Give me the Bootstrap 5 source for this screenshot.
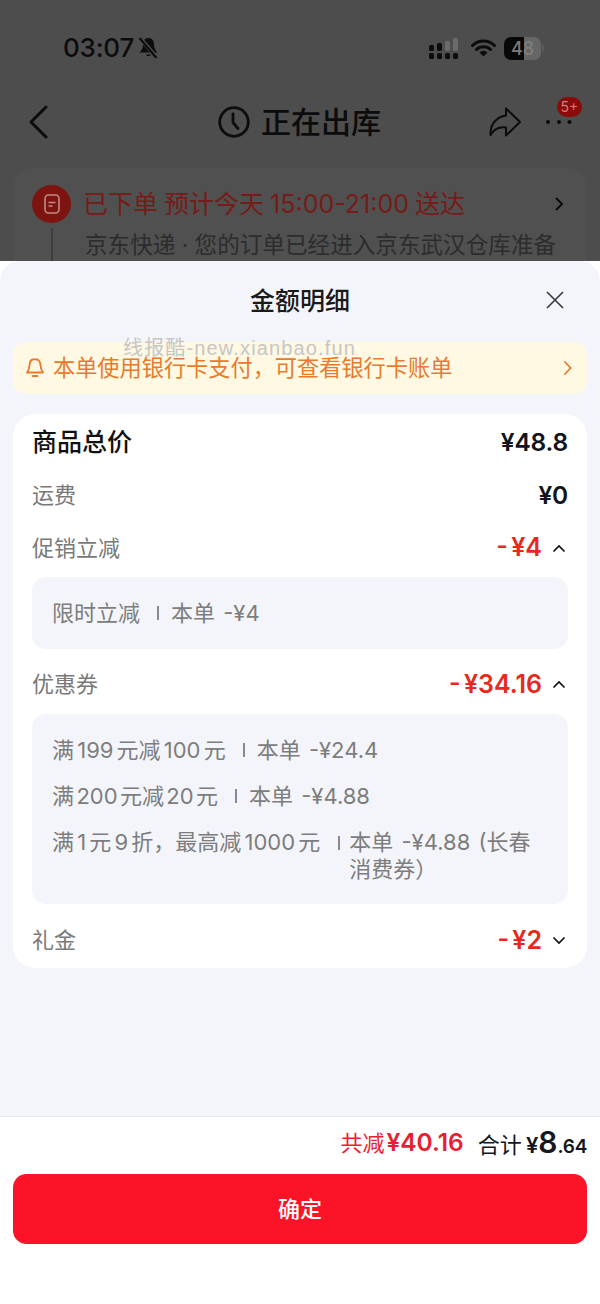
<!DOCTYPE html>
<html lang="zh-CN">
<head>
<meta charset="utf-8">
<title>金额明细</title>
<link rel="stylesheet" href="https://cdn.jsdelivr.net/npm/bootstrap@5.3.0/dist/css/bootstrap.min.css">
<style>
html,body{margin:0;height:1304px;overflow:hidden;background:#fff}
body{font-family:"Inter","Noto Sans CJK SC",sans-serif;color:#1a1a1a}
.screen{width:600px;height:1304px}
.backdrop{height:261px;flex:none;background:#4d4d4d;overflow:hidden;color:#0c0c0c}
.statusrow{height:98px;padding:0 56px 2px 63px}
.clock{font-size:26px;font-weight:500;letter-spacing:-.2px;line-height:1}
.battery{width:37px;height:23px;border-radius:7px;background:linear-gradient(90deg,#080808 54%,#666 54%);font-size:18px;font-weight:500;line-height:23px;text-align:center}
.batfour{color:#7b7b7b}
.bateight{color:#7f7f7f}
.batcap{width:2px;height:8px;background:#5c5c5c;border-radius:0 2px 2px 0;margin-left:1px}
.navrow{height:48px;padding:0 28px 0 28px;position:relative}
.navtitle{font-size:30px;font-weight:500;line-height:48px;gap:11px;left:218px;top:0}
.redbadge{top:-10px;right:-10px;width:25px;height:20px;border-radius:10px;background:#8b0b0b;color:#cf8078;font-size:14px;line-height:20px;text-align:center}
.ordercard{margin:22px 13px 0;height:120px;background:#505050;border-radius:20px;padding:15px 19px}
.ordericon{width:39px;height:38px;border-radius:50%;background:#7d1410;flex:none}
.orderhead{font-size:25px;line-height:42px;color:#761b17;font-weight:400;white-space:nowrap;word-spacing:-1px}
.ordertail{margin:3px 0 0 19px;padding-left:32px;border-left:2px solid #3d3d3d}
.ordersub{font-size:22.6px;line-height:34px;color:#2c2c2c;white-space:nowrap}
.sheet{background:#f4f5fa;border-radius:20px 20px 0 0;margin-top:0;min-height:0;position:relative;flex:1 1 auto}
.sheethead{height:81px;position:relative}
.sheettitle{font-size:25px;font-weight:500;line-height:81px}
.closer{position:absolute;right:35px;top:29px}
.notice{margin:0 13px;height:52px;background:#fff8e3;border-radius:13px;color:#e77b2b;font-size:22.2px;padding:0 14px 0 12px}
.wmark{position:absolute;left:123px;top:72px;font-size:20px;line-height:30px;color:#c6c6c6;letter-spacing:1.15px;white-space:nowrap;font-family:"Liberation Sans","Noto Sans CJK SC",sans-serif}
.pricebox{margin:20px 13px 0;height:554px;background:#fff;border-radius:22px;padding:0 19px}
.prow{display:flex;justify-content:space-between;align-items:center}
.prow-total{height:57px}
.prow-ship{height:48px}
.prow-promo{height:58px}
.prow-coupon{height:65px;padding-top:6px}
.prow-gift{height:64px;padding-top:9px}
.plabel{font-size:22px;color:#797979}
.ptotal{font-size:25px;font-weight:500;color:#111}
.pamount{font-size:24.500px;font-weight:600;color:#12131c;font-family:"Inter",sans-serif;letter-spacing:-.2px}
.pcut{font-size:25px;font-weight:600;color:#e8281c;font-family:"Inter",sans-serif;word-spacing:-3px}
.chev{width:14px;margin-left:10px;margin-right:2px;flex:none}
.detail{background:#f4f5fa;border-radius:14px;padding:0 20px;font-size:22px;color:#7d7d7d}
.detail-one{height:72px}
.detail-many{height:190px;padding-top:13px}
.dline{display:flex;align-items:center;white-space:nowrap}
.dline-single{height:46px}
.dline-wrap{margin-top:10px;line-height:27px;align-items:flex-start}
.dcond{word-spacing:-3px}
.dcond-tight{word-spacing:-3.800px}
.dval{word-spacing:2px}
.dsep{flex:none;width:2px;height:14px;background:#8a8a8a;margin:0 12px 0 17px}
.dsep-wrap{margin:7px 9px 0 18px}
.dval-wrap{white-space:normal;width:182px}
.sumbar{height:188px;flex:none;background:#fff;border-top:1px solid #e8e9ec;padding:0 13px}
.sumrow{height:57px;font-size:22px;padding-bottom:6px}
.cutsum{color:#e81f33}
.cutsum b,.paysum b{font-weight:600;font-family:"Inter",sans-serif}
.cutsum b{font-size:24.500px;margin-left:2px}
.paysum{margin-left:14px;color:#15161e;word-spacing:-2px}
.paybig{font-size:30px}
.paysmall{font-size:19px;letter-spacing:-.3px}
.okbtn{height:70px;width:100%;background:#fb1427;border-color:#fb1427;border-radius:13px;color:#fff;font-size:22px;font-weight:500}
.okbtn:hover{background:#fb1427;border-color:#fb1427;color:#fff}
</style>
</head>
<body>
<div class="screen d-flex flex-column">
  <div class="backdrop">
    <div class="statusrow d-flex align-items-center justify-content-between">
      <div class="d-flex align-items-center gap-1">
        <span class="clock">03:07</span>
        <svg width="21" height="24" viewBox="0 0 21 24"><path d="M10.500 2C6.500 2 5 5 5 8.500c0 4-1.500 6-3.500 8h18c-2-2-3.500-4-3.500-8C16 5 14.500 2 10.500 2z" fill="#0c0c0c"/><path d="M8 18.500a2.700 2.700 0 0 0 5 0z" fill="#0c0c0c"/><path d="M2.500 2.500l17 20" stroke="#4d4d4d" stroke-width="4"/><path d="M1.500 2l17 20" stroke="#0c0c0c" stroke-width="2"/></svg>
      </div>
      <div class="d-flex align-items-center">
        <svg width="30" height="21" viewBox="0 0 30 21" class="me-2"><g fill="#0c0c0c"><rect x="0" y="7" width="5" height="6" rx="1.500"/><rect x="8" y="5" width="5" height="8" rx="1.500"/><rect x="0" y="15" width="5" height="6" rx="1.500"/><rect x="8" y="15" width="5" height="6" rx="1.500"/><rect x="16" y="15" width="5" height="6" rx="1.500"/><rect x="24" y="15" width="5" height="6" rx="1.500"/></g><g fill="#6a6a6a"><rect x="16" y="3" width="5" height="10" rx="1.500"/><rect x="24" y="0" width="5" height="13" rx="1.500"/></g></svg>
        <svg width="25" height="20" viewBox="0 0 25 20" class="ms-1 me-2"><path d="M1.500 7.500a15.500 15.500 0 0 1 22 0M5.500 11.500a10 10 0 0 1 14 0" fill="none" stroke="#0c0c0c" stroke-width="3" stroke-linecap="round"/><path d="M8.500 14.500a5.500 5.500 0 0 1 8 0L12.500 18.500z" fill="#0c0c0c"/></svg>
        <div class="battery"><span class="batfour">4</span><span class="bateight">8</span></div><div class="batcap"></div>
      </div>
    </div>
    <div class="navrow d-flex align-items-center justify-content-between">
      <svg width="20" height="34" viewBox="0 0 20 34"><path d="M18 2L3 17l15 15" fill="none" stroke="#0c0c0c" stroke-width="3" stroke-linecap="round" stroke-linejoin="round"/></svg>
      <div class="navtitle position-absolute d-flex align-items-center">
        <svg width="32" height="32" viewBox="0 0 32 32"><circle cx="16" cy="16" r="14.300" fill="none" stroke="#0c0c0c" stroke-width="2.800"/><path d="M15 8v8.500l5 6" fill="none" stroke="#0c0c0c" stroke-width="2.800" stroke-linecap="round"/></svg>
        <span>正在出库</span>
      </div>
      <div class="d-flex align-items-center position-relative">
        <svg width="32" height="30" viewBox="0 0 32 30"><path d="M17 1.500L31 15 17 28.500V20.500C10 19.500 5 22 1.500 28 1 17 8 9.500 17 8.500z" fill="none" stroke="#0c0c0c" stroke-width="2" stroke-linejoin="round"/></svg>
        <svg width="27" height="6" viewBox="0 0 27 6" class="ms-4"><circle cx="3" cy="3" r="2" fill="#0c0c0c"/><circle cx="14" cy="3" r="2" fill="#0c0c0c"/><circle cx="24.500" cy="3" r="2" fill="#0c0c0c"/></svg>
        <div class="redbadge position-absolute">5+</div>
      </div>
    </div>
    <div class="ordercard">
      <div class="d-flex align-items-center">
        <div class="ordericon d-flex align-items-center justify-content-center me-2">
          <svg width="16" height="20" viewBox="0 0 16 20"><rect x="1" y="1" width="14" height="18" rx="3.500" fill="none" stroke="#c08a86" stroke-width="1.600"/><path d="M4.500 8.500h7M4.500 12h4" stroke="#c08a86" stroke-width="1.500"/></svg>
        </div>
        <div class="orderhead flex-grow-1 ms-1">已下单 预计今天 15:00-21:00 送达</div>
        <svg width="10" height="16" viewBox="0 0 10 16" class="me-1"><path d="M2 2l6 6-6 6" fill="none" stroke="#0c0c0c" stroke-width="2"/></svg>
      </div>
      <div class="ordertail"><div class="ordersub">京东快递 · 您的订单已经进入京东武汉仓库准备</div></div>
    </div>
  </div>
  <div class="sheet">
    <div class="sheethead text-center">
      <div class="sheettitle">金额明细</div>
      <svg class="closer" width="20" height="20" viewBox="0 0 20 20"><path d="M2 2l16 16M18 2L2 18" stroke="#3c3c3c" stroke-width="1.700" fill="none"/></svg>
    </div>
    <div class="wmark">线报酷-new.xianbao.fun</div>
    <div class="notice d-flex align-items-center">
      <svg width="20" height="22" viewBox="0 0 20 22" class="me-2 flex-shrink-0"><path d="M10 2c-3.800 0-5.500 3-5.500 6.500 0 3.500-1 5-2.500 7h16c-1.500-2-2.500-3.500-2.500-7C15.500 5 13.800 2 10 2zM7.500 19h5" fill="none" stroke="#e77b2b" stroke-width="1.800" stroke-linecap="round" stroke-linejoin="round"/></svg>
      <span class="flex-grow-1">本单使用银行卡支付，可查看银行卡账单</span>
      <svg width="10" height="16" viewBox="0 0 10 16"><path d="M2 2l5.500 6-5.500 6" fill="none" stroke="#e77b2b" stroke-width="1.800" stroke-linecap="round"/></svg>
    </div>
    <div class="pricebox">
      <div class="prow prow-total"><span class="ptotal">商品总价</span><span class="pamount">¥48.8</span></div>
      <div class="prow prow-ship"><span class="plabel">运费</span><span class="pamount">¥0</span></div>
      <div class="prow prow-promo"><span class="plabel">促销立减</span><span class="d-flex align-items-center"><span class="pcut">- ¥4</span><svg class="chev" height="9" viewBox="0 0 14 9"><path d="M1.500 7.500L7 2l5.500 5.500" fill="none" stroke="#111" stroke-width="1.700"/></svg></span></div>
      <div class="detail detail-one d-flex align-items-center"><div class="dline"><span>限时立减</span><span class="dsep"></span><span class="dval">本单 -¥4</span></div></div>
      <div class="prow prow-coupon"><span class="plabel">优惠券</span><span class="d-flex align-items-center"><span class="pcut">- ¥34.16</span><svg class="chev" height="9" viewBox="0 0 14 9"><path d="M1.500 7.500L7 2l5.500 5.500" fill="none" stroke="#111" stroke-width="1.700"/></svg></span></div>
      <div class="detail detail-many">
        <div class="dline dline-single"><span class="dcond">满 199 元减 100 元</span><span class="dsep"></span><span class="dval">本单 -¥24.4</span></div>
        <div class="dline dline-single"><span class="dcond-tight">满 200 元减 20 元</span><span class="dsep"></span><span class="dval">本单 -¥4.88</span></div>
        <div class="dline dline-wrap"><span class="dcond">满 1 元 9 折，最高减 1000 元</span><span class="dsep dsep-wrap"></span><span class="dval dval-wrap">本单 -¥4.88 (长春消费券）</span></div>
      </div>
      <div class="prow prow-gift"><span class="plabel">礼金</span><span class="d-flex align-items-center"><span class="pcut">- ¥2</span><svg class="chev" height="9" viewBox="0 0 14 9"><path d="M1.500 1.500L7 7l5.500-5.500" fill="none" stroke="#111" stroke-width="1.700"/></svg></span></div>
    </div>
  </div>
  <div class="sumbar">
    <div class="sumrow d-flex align-items-center justify-content-end">
      <span class="cutsum">共减<b>¥40.16</b></span>
      <span class="paysum">合计 <b>¥<span class="paybig">8</span><span class="paysmall">.64</span></b></span>
    </div>
    <button type="button" class="btn okbtn">确定</button>
  </div>
</div>
</body>
</html>
